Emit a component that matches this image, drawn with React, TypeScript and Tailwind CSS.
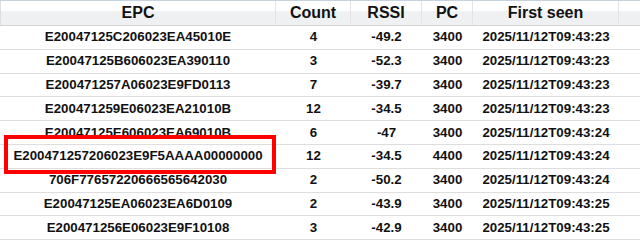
const rows = [
  { epc: 'E20047125C206023EA45010E', count: '4', rssi: '-49.2', pc: '3400', seen: '2025/11/12T09:43:23' },
  { epc: 'E20047125B606023EA390110', count: '3', rssi: '-52.3', pc: '3400', seen: '2025/11/12T09:43:23' },
  { epc: 'E200471257A06023E9FD0113', count: '7', rssi: '-39.7', pc: '3400', seen: '2025/11/12T09:43:23' },
  { epc: 'E200471259E06023EA21010B', count: '12', rssi: '-34.5', pc: '3400', seen: '2025/11/12T09:43:23' },
  { epc: 'E20047125E606023EA69010B', count: '6', rssi: '-47', pc: '3400', seen: '2025/11/12T09:43:24' },
  { epc: 'E200471257206023E9F5AAAA00000000', count: '12', rssi: '-34.5', pc: '4400', seen: '2025/11/12T09:43:24' },
  { epc: '706F77657220666565642030', count: '2', rssi: '-50.2', pc: '3400', seen: '2025/11/12T09:43:24' },
  { epc: 'E20047125EA06023EA6D0109', count: '2', rssi: '-43.9', pc: '3400', seen: '2025/11/12T09:43:25' },
  { epc: 'E200471256E06023E9F10108', count: '3', rssi: '-42.9', pc: '3400', seen: '2025/11/12T09:43:25' },
];

const cols = ['w-[276px]', 'w-[75px]', 'w-[71px]', 'w-[51px]', 'w-[146px]'];

export default function App() {
  return (
    <div
      className="relative w-[640px] h-[241px] overflow-hidden bg-white text-[#111]"
      style={{ fontFamily: '"Liberation Sans", Arial, sans-serif' }}
    >
      <div className="flex h-[26px] border-t border-[#c5d3e0] border-b border-b-[#d4d4d4] bg-[linear-gradient(to_bottom,#ffffff_0%,#ffffff_42%,#f0f1f3_44%,#eef0f2_100%)] text-[16px] font-bold">
        {['EPC', 'Count', 'RSSI', 'PC', 'First seen'].map((h, i) => (
          <div
            key={h}
            className={`${cols[i]} shrink-0 flex items-center justify-center border-r border-[#e2e4e7] ${i === 0 ? 'border-l border-l-[#dcdfe2]' : ''}`}
          >
            {h}
          </div>
        ))}
        <div className="flex-1" />
      </div>

      {rows.map((r) => (
        <div key={r.epc} className="flex h-[23.8px] border-b border-[#dedede] text-[13.3px] font-bold">
          {[r.epc, r.count, r.rssi, r.pc, r.seen].map((v, i) => (
            <div key={i} className={`${cols[i]} shrink-0 flex items-center justify-center`}>
              {v}
            </div>
          ))}
          <div className="flex-1" />
        </div>
      ))}

      <div className="absolute left-[4px] top-[135px] w-[272px] h-[39px] border-[4px] border-[#ff0000]" />
    </div>
  );
}
